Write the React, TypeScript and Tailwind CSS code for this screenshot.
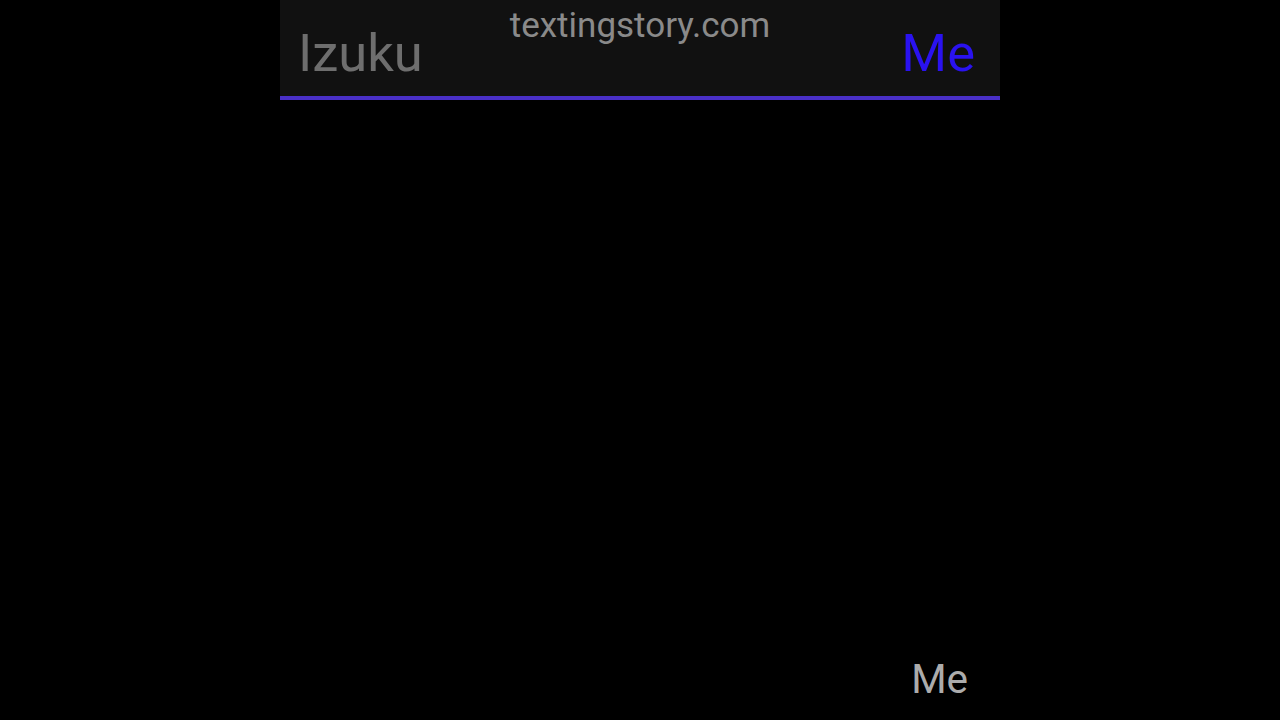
export default function App() {
  return (
    <div className="flex h-[720px] w-full justify-center bg-black font-['Roboto',sans-serif]">
      <div className="flex w-[720px] flex-col">
        <header className="relative h-[96px] border-b-4 border-[#4a30c8] bg-[#111111] box-content">
          <div className="absolute left-0 right-0 top-[3px] text-center text-[35px] leading-[46px] text-[#8a8a8a]">
            textingstory.com
          </div>
          <div className="flex h-full items-end justify-between px-[18px] pb-[12px]">
            <span className="text-[52.5px] leading-[62px] text-[#6e6e6e]">Izuku</span>
            <span className="pr-[7px] text-[52.5px] leading-[62px] text-[#2a12f0]">Me</span>
          </div>
        </header>
        <main className="flex flex-1 flex-col justify-end">
          <div className="flex justify-end pb-[17px] pr-[32px]">
            <span className="text-[40.5px] leading-[48px] text-[#acacac]">Me</span>
          </div>
        </main>
      </div>
    </div>
  );
}
